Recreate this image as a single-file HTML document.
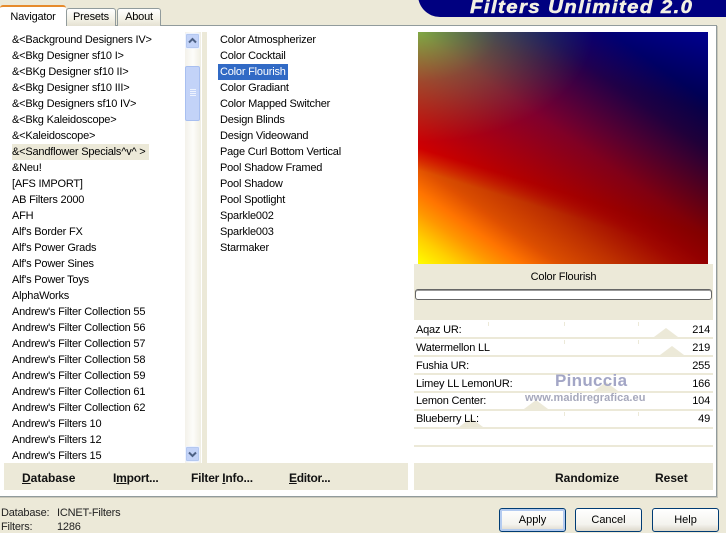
<!DOCTYPE html>
<html><head><meta charset="utf-8"><style>
html,body{margin:0;padding:0;width:726px;height:533px;overflow:hidden;background:#ece9d8}
body{position:relative;font:11px/16px "Liberation Sans",sans-serif;letter-spacing:-.2px;color:#000}
div{position:absolute;box-sizing:border-box}
.panel{left:-2px;top:25px;width:719px;height:472px;background:#fff;border:1px solid #919b9c;box-shadow:1px 1px 0 #c9c7ba}
.tab{top:8px;height:18px;border:1px solid #919b9c;border-bottom:0;border-radius:3px 3px 0 0;background:linear-gradient(#fff,#f3f1e6 60%,#e4e1d2);text-align:center;line-height:17px}
.list{white-space:nowrap}
.list div{height:16px;line-height:16px;left:0;white-space:nowrap}
.cream{background:#ece9d8}
.sep{left:414px;width:299px;height:2px;background:#ece9d8}
.l{left:416px;height:16px;white-space:nowrap}
.v{left:660px;width:50px;text-align:right;height:16px}
.tri{width:0;height:0;border-left:12px solid transparent;border-right:12px solid transparent;border-bottom:9px solid #ece9d8}
.tick{width:1px;height:4px;background:#ece9d8}
.b{font-size:12px;letter-spacing:0;font-weight:bold;top:470px;height:16px;white-space:nowrap;color:#111}
.btn{top:508px;width:67px;height:24px;border:1px solid #003c74;border-radius:3px;background:linear-gradient(#fff,#f4f3ee 70%,#dcd8cb);text-align:center;line-height:23px;letter-spacing:0}
.ch{left:0;top:0;width:290px;height:232px;mix-blend-mode:screen}
u{text-decoration:underline}
</style></head><body>
<div class="panel"></div>
<div style="left:0;top:5px;width:66px;height:22px;background:#fff;border-radius:3px 3px 0 0;border-top:2px solid #e68b2c;text-align:center;line-height:20px">Navigator</div>
<div class="tab" style="left:66px;width:50px">Presets</div>
<div class="tab" style="left:117px;width:44px">About</div>

<div style="left:418px;top:-20px;width:320px;height:37px;background:#000080;border-radius:0 0 0 22px"></div>
<div style="left:470px;top:-4px;height:22px;font:italic bold 18.5px/22px 'Liberation Sans',sans-serif;color:#f2f0e4;letter-spacing:1.3px;white-space:nowrap;transform:scaleX(1.1);transform-origin:left;-webkit-text-stroke:.5px #f2f0e4">Filters Unlimited 2.0</div>

<div class="list" style="left:12px;top:32px;width:170px;height:431px;overflow:hidden">
<div style="left:-2px;top:112px;width:139px;background:#ece9d8"></div>
<div style="top:0">&amp;&lt;Background Designers IV&gt;</div>
<div style="top:16px">&amp;&lt;Bkg Designer sf10 I&gt;</div>
<div style="top:32px">&amp;&lt;BKg Designer sf10 II&gt;</div>
<div style="top:48px">&amp;&lt;Bkg Designer sf10 III&gt;</div>
<div style="top:64px">&amp;&lt;Bkg Designers sf10 IV&gt;</div>
<div style="top:80px">&amp;&lt;Bkg Kaleidoscope&gt;</div>
<div style="top:96px">&amp;&lt;Kaleidoscope&gt;</div>
<div style="top:112px">&amp;&lt;Sandflower Specials^v^ &gt;</div>
<div style="top:128px">&amp;Neu!</div>
<div style="top:144px">[AFS IMPORT]</div>
<div style="top:160px">AB Filters 2000</div>
<div style="top:176px">AFH</div>
<div style="top:192px">Alf's Border FX</div>
<div style="top:208px">Alf's Power Grads</div>
<div style="top:224px">Alf's Power Sines</div>
<div style="top:240px">Alf's Power Toys</div>
<div style="top:256px">AlphaWorks</div>
<div style="top:272px">Andrew's Filter Collection 55</div>
<div style="top:288px">Andrew's Filter Collection 56</div>
<div style="top:304px">Andrew's Filter Collection 57</div>
<div style="top:320px">Andrew's Filter Collection 58</div>
<div style="top:336px">Andrew's Filter Collection 59</div>
<div style="top:352px">Andrew's Filter Collection 61</div>
<div style="top:368px">Andrew's Filter Collection 62</div>
<div style="top:384px">Andrew's Filters 10</div>
<div style="top:400px">Andrew's Filters 12</div>
<div style="top:416px">Andrew's Filters 15</div>
</div>

<div style="left:185px;top:32px;width:16px;height:431px;background:linear-gradient(90deg,#f3f1ea,#fdfdfa 50%,#f0eee2)"></div>
<div style="left:185px;top:33px;width:15px;height:16px;background:#c3d3f8;border:1px solid #eef3fe;border-radius:2px;box-shadow:0 0 0 1px #b4c8f0 inset"></div>
<svg style="position:absolute;left:185px;top:33px" width="16" height="16"><path d="M4 9.5 L7.5 6 L11 9.5" fill="none" stroke="#4d6185" stroke-width="2"/></svg>
<div style="left:185px;top:66px;width:15px;height:55px;background:#c3d3f8;border:1px solid #a8bff0;border-radius:2px"></div>
<svg style="position:absolute;left:185px;top:66px" width="16" height="55"><path d="M5 23.5H11M5 25.5H11M5 27.5H11M5 29.5H11" stroke="#eef3fe" stroke-width="1"/></svg>
<div style="left:185px;top:446px;width:15px;height:16px;background:#c3d3f8;border:1px solid #eef3fe;border-radius:2px;box-shadow:0 0 0 1px #b4c8f0 inset"></div>
<svg style="position:absolute;left:185px;top:446px" width="16" height="16"><path d="M4 6.5 L7.5 10 L11 6.5" fill="none" stroke="#4d6185" stroke-width="2"/></svg>
<div class="cream" style="left:202px;top:32px;width:5px;height:431px"></div>

<div class="list" style="left:220px;top:32px;width:185px;height:240px">
<div style="left:-2px;top:32px;width:70px;background:#316ac5"></div>
<div style="top:0">Color Atmospherizer</div>
<div style="top:16px">Color Cocktail</div>
<div style="top:32px;color:#fff">Color Flourish</div>
<div style="top:48px">Color Gradiant</div>
<div style="top:64px">Color Mapped Switcher</div>
<div style="top:80px">Design Blinds</div>
<div style="top:96px">Design Videowand</div>
<div style="top:112px">Page Curl Bottom Vertical</div>
<div style="top:128px">Pool Shadow Framed</div>
<div style="top:144px">Pool Shadow</div>
<div style="top:160px">Pool Spotlight</div>
<div style="top:176px">Sparkle002</div>
<div style="top:192px">Sparkle003</div>
<div style="top:208px">Starmaker</div>
</div>

<div style="left:418px;top:32px;width:290px;height:232px;background:#000;isolation:isolate;overflow:hidden">
<div class="ch" style="background:linear-gradient(35deg,#ff0000 0,#ff0000 60px,#d80000 85px,#b00000 130px,#800000 190px,#200000 260px,#000000 300px)"></div>
<div class="ch" style="background:linear-gradient(35deg,#00ff00 0,#00d000 22px,#009800 43px,#007800 58px,#005000 80px,#003000 115px,#000800 150px,#000000 166px);-webkit-mask-image:linear-gradient(17deg,#000 0,#000 90px,transparent 111px);mask-image:linear-gradient(17deg,#000 0,#000 90px,transparent 111px)"></div>
<div class="ch" style="background:radial-gradient(ellipse 175px 110px at 0 0,#00a800 0,#004800 45%,#000000 100%)"></div>
<div class="ch" style="background:linear-gradient(17deg,#000000 0,#000000 111px,#000030 180px,#000048 230px,#000090 307px)"></div>
</div>

<div class="cream" style="left:414px;top:264px;width:299px;height:56px"></div>
<div style="left:414px;top:269px;width:299px;height:16px;text-align:center">Color Flourish</div>
<div style="left:415px;top:289px;width:297px;height:11px;background:#fff;border:1px solid #666;border-radius:3px;box-shadow:0 1px 0 #999 inset"></div>

<div class="sep" style="top:337px"></div><div class="sep" style="top:355px"></div><div class="sep" style="top:373px"></div><div class="sep" style="top:391px"></div><div class="sep" style="top:409px"></div><div class="sep" style="top:427px"></div><div class="sep" style="top:445px"></div>
<div class="tick" style="left:564px;top:322px"></div><div class="tick" style="left:638px;top:322px"></div><div class="tick" style="left:488px;top:322px"></div>
<div class="tick" style="left:564px;top:340px"></div><div class="tick" style="left:638px;top:340px"></div>
<div class="tick" style="left:564px;top:412px"></div><div class="tick" style="left:638px;top:412px"></div>
<div class="tri" style="left:654px;top:328px"></div>
<div class="tri" style="left:660px;top:346px"></div>
<div class="tri" style="left:594px;top:382px"></div>
<div class="tri" style="left:524px;top:400px"></div>
<div class="tri" style="left:459px;top:418px"></div>

<div class="l" style="top:322px">Aqaz UR:</div><div class="v" style="top:322px">214</div>
<div class="l" style="top:340px">Watermellon LL</div><div class="v" style="top:340px">219</div>
<div class="l" style="top:358px">Fushia UR:</div><div class="v" style="top:358px">255</div>
<div class="l" style="top:376px">Limey LL LemonUR:</div><div class="v" style="top:376px">166</div>
<div class="l" style="top:393px">Lemon Center:</div><div class="v" style="top:393px">104</div>
<div class="l" style="top:411px">Blueberry LL:</div><div class="v" style="top:411px">49</div>

<div style="left:555px;top:371px;height:20px;font:bold 17px/20px 'Liberation Sans',sans-serif;color:#a3a6c6;letter-spacing:.3px;white-space:nowrap">Pinuccia</div>
<div style="left:525px;top:391px;height:14px;font:bold 11px/14px 'Liberation Sans',sans-serif;color:#a6a8bc;letter-spacing:.05px;white-space:nowrap">www.maidiregrafica.eu</div>

<div class="cream" style="left:4px;top:463px;width:404px;height:27px"></div>
<div class="cream" style="left:414px;top:463px;width:299px;height:27px"></div>
<div class="b" style="left:22px"><u>D</u>atabase</div>
<div class="b" style="left:113px;letter-spacing:-.2px">I<u>m</u>port...</div>
<div class="b" style="left:191px;letter-spacing:-.2px">Filter <u>I</u>nfo...</div>
<div class="b" style="left:289px;letter-spacing:-.3px"><u>E</u>ditor...</div>
<div class="b" style="left:555px">Randomize</div>
<div class="b" style="left:655px">Reset</div>

<div style="left:1px;top:505px;height:16px;color:#222;white-space:nowrap">Database:</div>
<div style="left:57px;top:505px;height:16px;color:#222;white-space:nowrap">ICNET-Filters</div>
<div style="left:1px;top:519px;height:16px;color:#222;white-space:nowrap">Filters:</div>
<div style="left:57px;top:519px;height:16px;color:#222;white-space:nowrap">1286</div>

<div class="btn" style="left:499px;box-shadow:inset 0 0 0 2px #b4cbf0">Apply</div>
<div class="btn" style="left:575px">Cancel</div>
<div class="btn" style="left:652px">Help</div>
</body></html>
